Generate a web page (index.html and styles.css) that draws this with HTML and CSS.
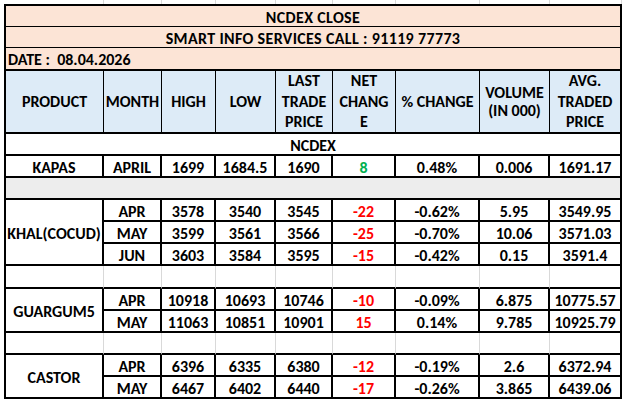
FILE: index.html
```html
<!DOCTYPE html>
<html>
<head>
<meta charset="utf-8">
<link rel="stylesheet" href="styles.css">
</head>
<body>
<div class="sheet">
  <div class="gridtop">
    <span></span><span></span><span></span><span></span><span></span><span></span><span></span><span></span><span></span>
  </div>
  <div class="t">
    <div class="c full peach thin wide">NCDEX CLOSE</div>
    <div class="c full peach thin wide">SMART INFO SERVICES CALL : 91119 77773</div>
    <div class="c full peach date">DATE :&nbsp; 08.04.2026</div>

    <div class="c h">PRODUCT</div>
    <div class="c h">MONTH</div>
    <div class="c h">HIGH</div>
    <div class="c h">LOW</div>
    <div class="c h">LAST<br>TRADE<br>PRICE</div>
    <div class="c h">NET<br>CHANG<br>E</div>
    <div class="c h">% CHANGE</div>
    <div class="c h vol">VOLUME<br>(IN 000)</div>
    <div class="c h last">AVG.<br>TRADED<br>PRICE</div>

    <div class="c full sect">NCDEX</div>

    <div class="c">KAPAS</div>
    <div class="c">APRIL</div>
    <div class="c">1699</div>
    <div class="c">1684.5</div>
    <div class="c">1690</div>
    <div class="c up">8</div>
    <div class="c">0.48%</div>
    <div class="c">0.006</div>
    <div class="c">1691.17</div>

    <div class="c full gray"></div>

    <div class="c prod3">KHAL(COCUD)</div>
    <div class="c">APR</div>
    <div class="c">3578</div>
    <div class="c">3540</div>
    <div class="c">3545</div>
    <div class="c dn">-22</div>
    <div class="c">-0.62%</div>
    <div class="c">5.95</div>
    <div class="c">3549.95</div>
    <div class="c">MAY</div>
    <div class="c">3599</div>
    <div class="c">3561</div>
    <div class="c">3566</div>
    <div class="c dn">-25</div>
    <div class="c">-0.70%</div>
    <div class="c">10.06</div>
    <div class="c">3571.03</div>
    <div class="c">JUN</div>
    <div class="c">3603</div>
    <div class="c">3584</div>
    <div class="c">3595</div>
    <div class="c dn">-15</div>
    <div class="c">-0.42%</div>
    <div class="c">0.15</div>
    <div class="c">3591.4</div>

    <div class="c e"></div><div class="c e"></div><div class="c e"></div><div class="c e"></div><div class="c e"></div><div class="c e"></div><div class="c e"></div><div class="c e"></div><div class="c e last"></div>

    <div class="c prod2">GUARGUM5</div>
    <div class="c">APR</div>
    <div class="c">10918</div>
    <div class="c">10693</div>
    <div class="c">10746</div>
    <div class="c dn">-10</div>
    <div class="c">-0.09%</div>
    <div class="c">6.875</div>
    <div class="c">10775.57</div>
    <div class="c">MAY</div>
    <div class="c">11063</div>
    <div class="c">10851</div>
    <div class="c">10901</div>
    <div class="c dn">15</div>
    <div class="c">0.14%</div>
    <div class="c">9.785</div>
    <div class="c">10925.79</div>

    <div class="c e"></div><div class="c e"></div><div class="c e"></div><div class="c e"></div><div class="c e"></div><div class="c e"></div><div class="c e"></div><div class="c e"></div><div class="c e last"></div>

    <div class="c prod2">CASTOR</div>
    <div class="c">APR</div>
    <div class="c">6396</div>
    <div class="c">6335</div>
    <div class="c">6380</div>
    <div class="c dn">-12</div>
    <div class="c">-0.19%</div>
    <div class="c">2.6</div>
    <div class="c">6372.94</div>
    <div class="c">MAY</div>
    <div class="c">6467</div>
    <div class="c">6402</div>
    <div class="c">6440</div>
    <div class="c dn">-17</div>
    <div class="c">-0.26%</div>
    <div class="c">3.865</div>
    <div class="c">6439.06</div>
  </div>
</div>
</body>
</html>
```
FILE: styles.css
```css
html, body {
  margin: 0;
  padding: 0;
  background: #ffffff;
}

.sheet {
  padding-left: 4px;
  font-family: Carlito, "Open Sans", sans-serif;
  font-weight: bold;
  font-size: 16px;
  color: #000;
}

.gridtop {
  display: grid;
  grid-template-columns: 98px 58px 54px 60px 57px 63px 84px 70px 72px;
  height: 4px;
  padding-left: 2px;
}

.gridtop span {
  border-right: 1px solid #d9d9d9;
}

.t {
  display: grid;
  grid-template-columns: 98px 58px 54px 60px 57px 63px 84px 70px 72px;
  grid-template-rows: 21px 21px 23px 63px 22px 22px 22px 22px 22px 22px 23px 22px 22px 22px 22px 22px;
  border-left: 2px solid #000;
  border-top: 2px solid #000;
  width: max-content;
}

.c {
  box-sizing: border-box;
  border-right: 2px solid #000;
  border-bottom: 2px solid #000;
  display: flex;
  align-items: center;
  justify-content: center;
  text-align: center;
  padding-top: 3px;
  white-space: nowrap;
  line-height: 18px;
}

.full {
  grid-column: 1 / -1;
}

.peach {
  background: #fce4d6;
}

.thin {
  border-bottom-width: 1px;
}

.wide {
  letter-spacing: 0.35px;
}

.date {
  justify-content: flex-start;
  padding-left: 2px;
}

.h {
  background: #ddebf7;
  border-right-width: 1px;
  line-height: 20.5px;
  padding-top: 1px;
}

.h.last {
  border-right-width: 2px;
}

.h.vol {
  line-height: 18px;
}

.gray {
  background: #ededed;
}

.prod3 {
  grid-row: span 3;
}

.prod2 {
  grid-row: span 2;
}

.e {
  border-right: 1px solid #d9d9d9;
}

.e.last {
  border-right: 2px solid #000;
}

.up {
  color: #00b050;
}

.dn {
  color: #ff0000;
}
```
